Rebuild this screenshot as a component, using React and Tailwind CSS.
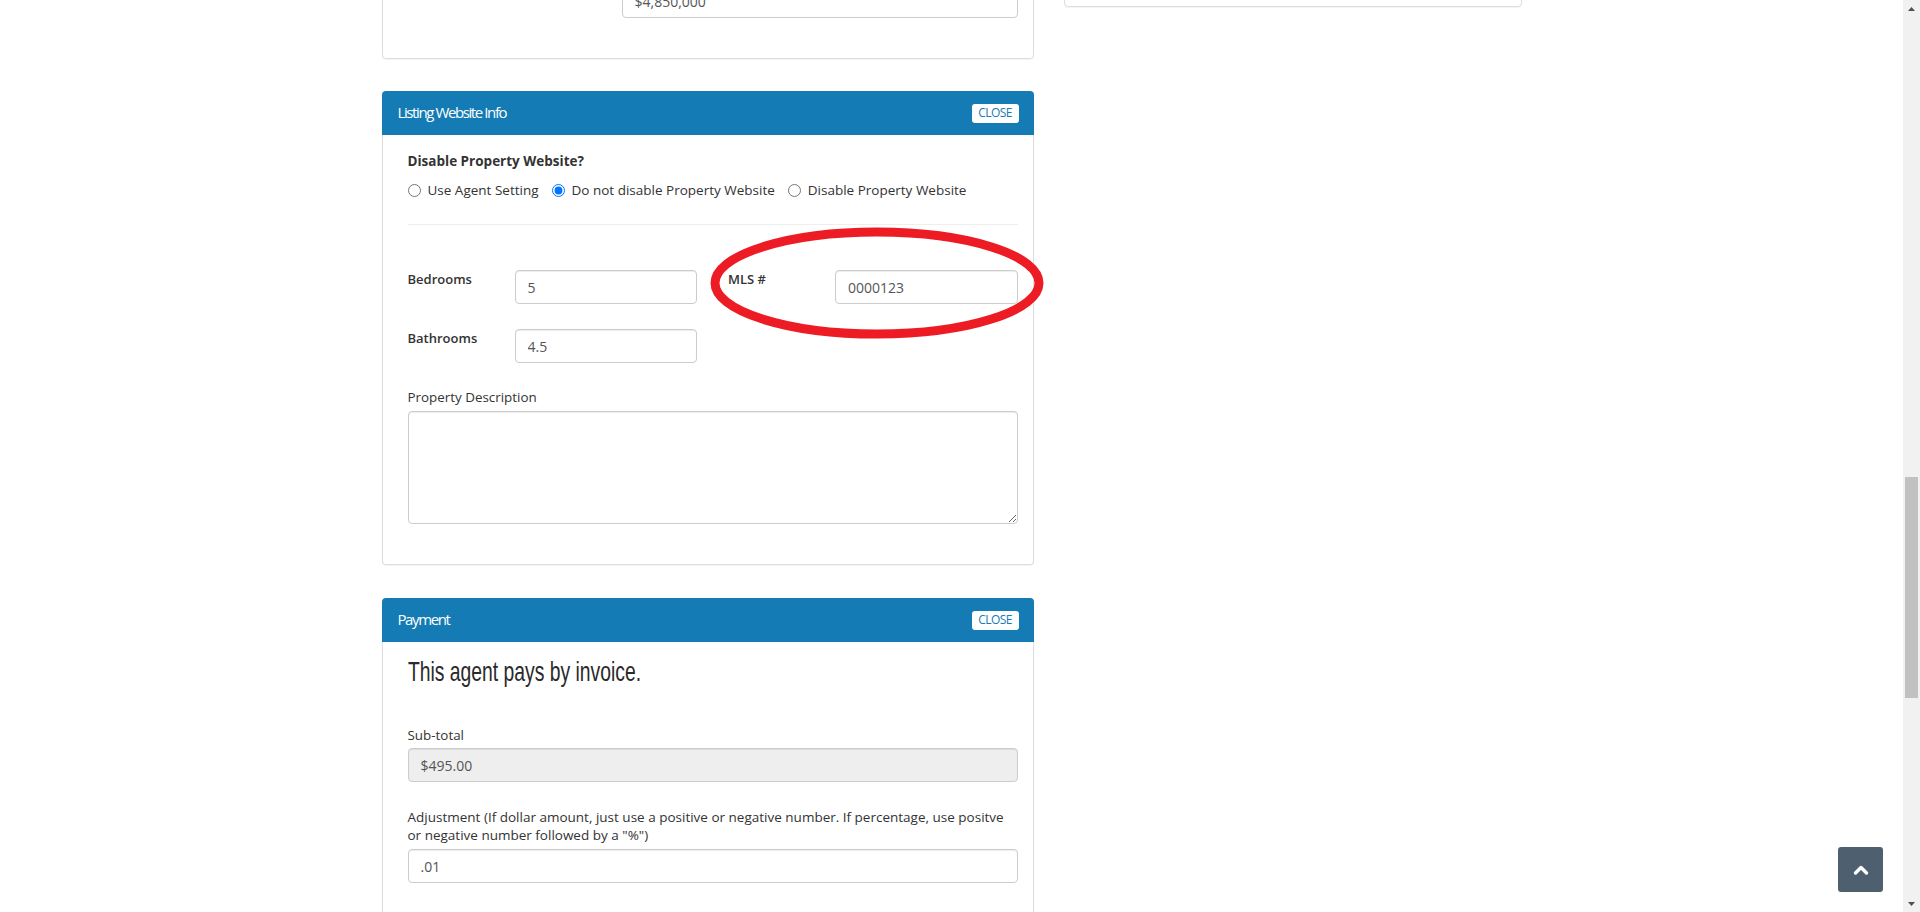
import { useState } from 'react'

// ─── Bits ─────────────────────────────────────────────────────────────────────
const inputCls =
  'h-[34px] w-full rounded-[4px] border border-[#ccc] px-[12px] text-[14px] text-[#555] shadow-[inset_0_1px_1px_rgba(0,0,0,0.075)] outline-none'

function PanelHeader({ title }) {
  return (
    <div className="h-[44px] bg-[#147bb4] rounded-t-[4px] flex items-center justify-between pl-[16px] pr-[15px]">
      <span className="text-white text-[15px] tracking-[-1.4px] -mt-px">{title}</span>
      <button className="h-[19px] w-[47px] bg-white rounded-[3px] text-[#1a7ab5] text-[12px] tracking-[-0.6px] leading-none">
        CLOSE
      </button>
    </div>
  )
}

function FieldRow({ label, value }) {
  return (
    <div className="flex items-start">
      <label className="w-[107px] shrink-0 text-[13px] leading-[18px] font-semibold text-[#333]">{label}</label>
      <input className={`${inputCls} bg-white`} defaultValue={value} />
    </div>
  )
}

// ─── Cards ────────────────────────────────────────────────────────────────────
function ListingWebsiteInfo() {
  const [mode, setMode] = useState('keep')
  const opts = [
    ['agent', 'Use Agent Setting'],
    ['keep', 'Do not disable Property Website'],
    ['disable', 'Disable Property Website'],
  ]

  return (
    <div className="relative mt-[32px] rounded-[4px] shadow-[0_1px_1px_rgba(0,0,0,0.05)]">
      <PanelHeader title="Listing Website Info" />
      <div className="border border-t-0 border-[#ddd] rounded-b-[4px] pl-[25px] pr-[15px] pt-[17px] pb-[40px]">
        <p className="text-[13.5px] leading-[18px] font-bold text-[#333]">Disable Property Website?</p>
        <div className="mt-[11px] flex items-center gap-[13px] text-[13.5px] leading-[18px] text-[#333]">
          {opts.map(([key, text]) => (
            <label key={key} className="flex items-center gap-[7px]">
              <input
                type="radio"
                name="disable-site"
                checked={mode === key}
                onChange={() => setMode(key)}
                className="m-0 w-[13px] h-[13px]"
              />
              {text}
            </label>
          ))}
        </div>
        <div className="mt-[25px] h-px bg-[#eee]" />

        <div className="mt-[45px] grid grid-cols-2 gap-x-[31px] gap-y-[25px]">
          <FieldRow label="Bedrooms" value="5" />
          <FieldRow label="MLS #" value="0000123" />
          <FieldRow label="Bathrooms" value="4.5" />
        </div>

        <label className="mt-[25px] mb-[5px] block text-[13.4px] leading-[18px] text-[#333]">Property Description</label>
        <textarea className="block h-[113px] w-full rounded-[4px] border border-[#ccc] px-[12px] py-[6px] text-[14px] text-[#555] shadow-[inset_0_1px_1px_rgba(0,0,0,0.075)] outline-none" />
      </div>

      {/* red annotation round the MLS field */}
      <svg className="absolute left-[327px] top-[136px] pointer-events-none overflow-visible" width="336" height="114" viewBox="0 0 336 114">
        <ellipse cx="168" cy="56" rx="162" ry="51" fill="none" stroke="#ed1c24" strokeWidth="9" />
      </svg>
    </div>
  )
}

function Payment() {
  return (
    <div className="mt-[33px] rounded-[4px] shadow-[0_1px_1px_rgba(0,0,0,0.05)]">
      <PanelHeader title="Payment" />
      <div className="border border-t-0 border-[#ddd] pl-[25px] pr-[15px] pt-[13px] pb-[40px]">
        <h2
          className="text-[28px] leading-[34px] text-[#2a2a2a] origin-left scale-x-[0.69]"
          style={{ fontFamily: '"Liberation Sans", "DejaVu Sans", sans-serif' }}
        >
          This agent pays by invoice.
        </h2>

        <label className="mt-[37px] mb-[4px] block text-[13.4px] leading-[18px] text-[#333]">Sub-total</label>
        <input className={`${inputCls} bg-[#eee]`} defaultValue="$495.00" readOnly />

        <label className="mt-[26px] mb-[5px] block text-[13.5px] leading-[18px] text-[#333]">
          Adjustment (If dollar amount, just use a positive or negative number. If percentage, use positve
          <br />
          or negative number followed by a "%")
        </label>
        <input className={`${inputCls} bg-white`} defaultValue=".01" />
        <div className="h-[200px]" />
      </div>
    </div>
  )
}

// ─── Page ─────────────────────────────────────────────────────────────────────
export default function App() {
  return (
    <div className="h-screen w-full overflow-hidden flex bg-white" style={{ fontFamily: '"Open Sans", "Liberation Sans", sans-serif' }}>
      <div className="relative flex-1 overflow-hidden">
        <div className="w-[1140px] mx-auto -mt-[100px] flex items-start gap-[30px]">
          <div className="w-[652px] shrink-0">
            {/* tail of the card above */}
            <div className="rounded-[4px] border border-[#ddd] shadow-[0_1px_1px_rgba(0,0,0,0.05)] pl-[25px] pr-[15px] pt-[83px] pb-[40px]">
              <div className="flex">
                <div className="w-[214px] shrink-0" />
                <input className={`${inputCls} bg-white`} defaultValue="$4,850,000" />
              </div>
            </div>
            <ListingWebsiteInfo />
            <Payment />
          </div>
          <div className="w-[458px] shrink-0">
            <div className="h-[107px] rounded-[4px] border border-[#ddd] shadow-[0_1px_1px_rgba(0,0,0,0.05)]" />
          </div>
        </div>

        <button className="absolute right-[20px] bottom-[20px] w-[45px] h-[45px] rounded-[3px] bg-[#4e6070] flex items-center justify-center">
          <svg width="16" height="12" viewBox="0 0 16 12">
            <path d="M2.5 9 L8 3.5 L13.5 9" fill="none" stroke="#fff" strokeWidth="3.4" strokeLinecap="round" strokeLinejoin="round" />
          </svg>
        </button>
      </div>

      {/* window scrollbar */}
      <div className="w-[17px] shrink-0 bg-[#f1f1f1] flex flex-col">
        <div className="h-[17px] flex items-center justify-center">
          <svg width="7" height="4" viewBox="0 0 7 4"><path d="M3.5 0 L7 4 L0 4Z" fill="#505050" /></svg>
        </div>
        <div className="flex-1">
          <div className="mt-[460px] mx-[2px] h-[221px] bg-[#c1c1c1]" />
        </div>
        <div className="h-[17px] flex items-center justify-center">
          <svg width="7" height="4" viewBox="0 0 7 4"><path d="M0 0 L7 0 L3.5 4Z" fill="#505050" /></svg>
        </div>
      </div>
    </div>
  )
}
